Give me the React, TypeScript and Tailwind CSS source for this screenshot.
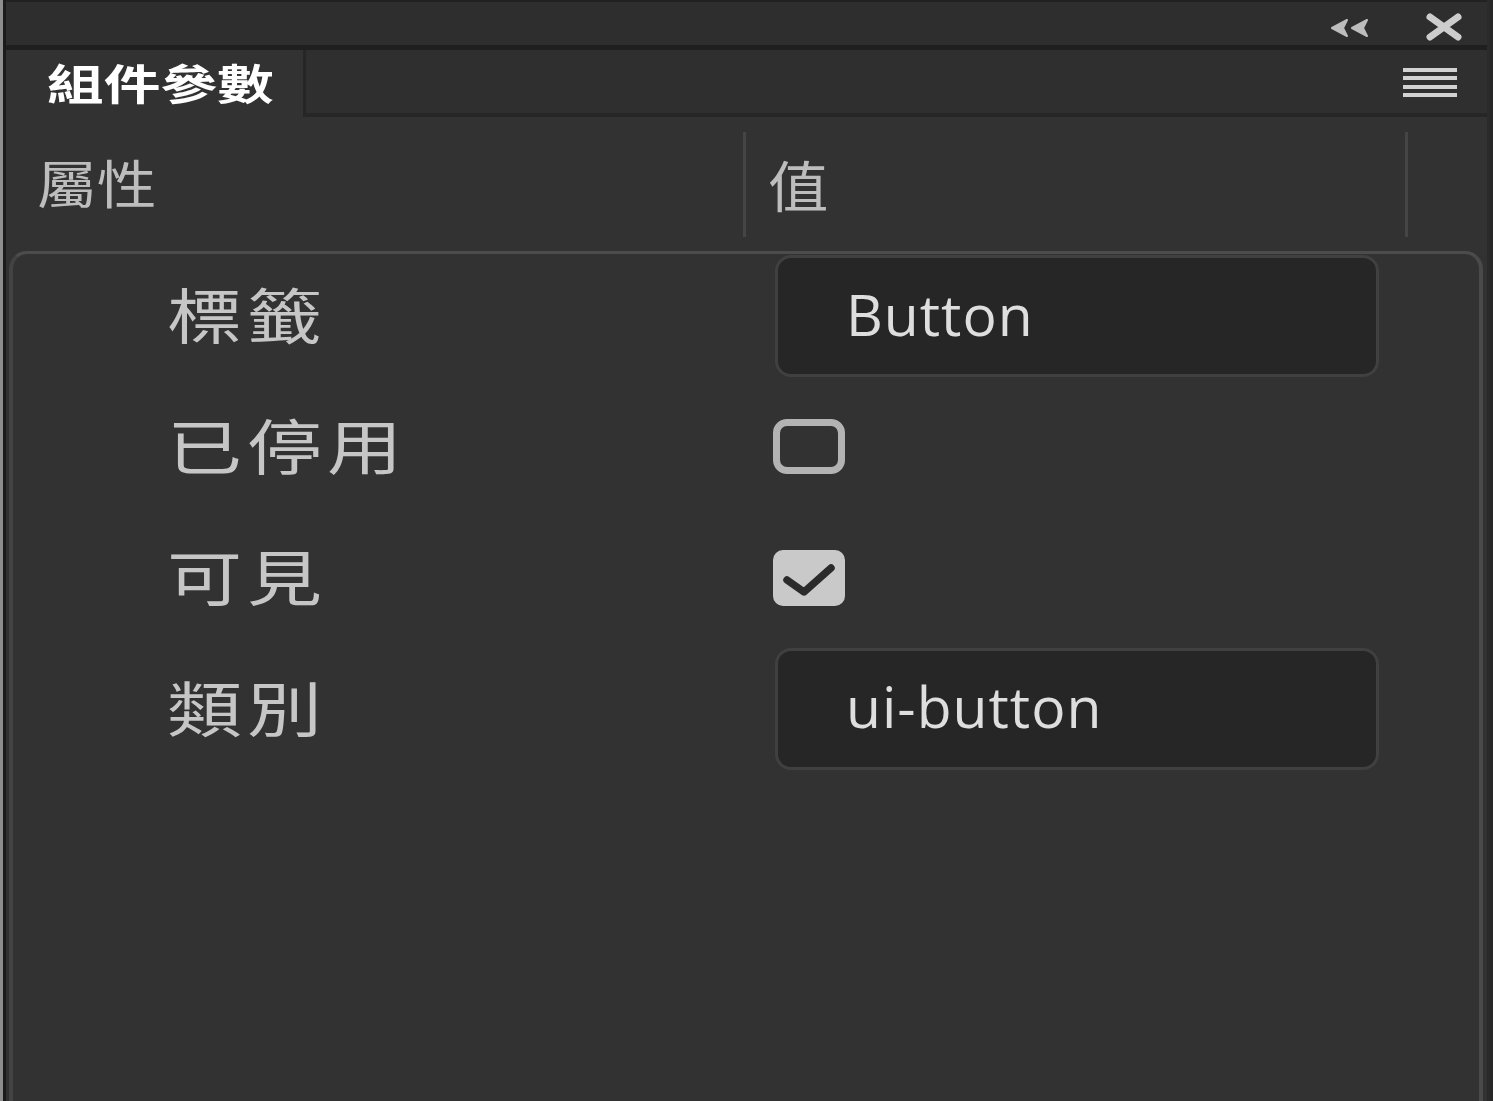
import React from "react";

const cjk = "font-['Noto_Sans_CJK_TC','Noto_Sans_CJK_SC',sans-serif]";

function Label({ text }: { text: string }) {
  return (
    <span
      className={`${cjk} inline-block origin-left scale-x-[1.25] text-[60px] leading-none tracking-[4px] text-[#c6c6c6]`}
    >
      {text}
    </span>
  );
}

function TextField({ value }: { value: string }) {
  return (
    <div className="w-[604px] h-[122px] rounded-[16px] border-[3px] border-[#404040] bg-[#262626] flex items-center pl-[68px]">
      <span className="font-['Open_Sans',sans-serif] font-medium text-[57px] leading-none tracking-[1px] text-[#dedede] pb-[4px]">
        {value}
      </span>
    </div>
  );
}

function Row({ label, children, first }: { label: string; children: React.ReactNode; first?: boolean }) {
  return (
    <div className={`grid grid-cols-[760px_1fr] items-center ${first ? "h-[122px] mt-[1px]" : "h-[131px]"}`}>
      <div className="pl-[154px] pb-[4px]">
        <Label text={label} />
      </div>
      <div className="flex items-center">{children}</div>
    </div>
  );
}

export default function App() {
  return (
    <div className="w-[1493px] h-[1101px] flex bg-[#262626] overflow-hidden">
      <div className="w-[3px] bg-[#8e8e8e]" />
      <div className="w-[1484px] flex flex-col border-l-[3px] border-[#1b1b1b] bg-[#323232]">
        {/* title bar */}
        <div className="h-[45px] bg-[#2e2e2e] border-t-[2px] border-[#222222] flex items-center justify-end pr-[24px] gap-[56px]">
          <svg width="40" height="20" viewBox="0 0 40 20" className="mt-[8px]">
            <path d="M18 2 L3 10 L18 18 L14 10 Z" fill="#bdbdbd" stroke="#bdbdbd" strokeWidth="2" strokeLinejoin="round" />
            <path d="M38 2 L23 10 L38 18 L34 10 Z" fill="#bdbdbd" stroke="#bdbdbd" strokeWidth="2" strokeLinejoin="round" />
          </svg>
          <svg width="38" height="28" viewBox="0 0 38 28" className="mt-[6px]">
            <path d="M5 4 L33 24 M33 4 L5 24" stroke="#cdcdcd" strokeWidth="7" strokeLinecap="round" />
          </svg>
        </div>
        <div className="h-[5px] bg-[#1f1f1f]" />
        {/* tab row */}
        <div className="h-[67px] flex">
          <div className="w-[297px] flex items-center pl-[41px] pb-[4px]">
            <span className={`${cjk} inline-block origin-left scale-x-[1.35] font-bold text-[42px] leading-none text-white`}>
              組件參數
            </span>
          </div>
          <div className="flex-1 bg-[#2f2f2f] border-l-[3px] border-b-[4px] border-[#262626] flex items-center justify-end pr-[30px]">
            <div className="w-[54px] flex flex-col gap-[4.5px] mt-[2px]">
              <div className="h-[4px] bg-[#d2d2d2]" />
              <div className="h-[4px] bg-[#d2d2d2]" />
              <div className="h-[4px] bg-[#d2d2d2]" />
              <div className="h-[4px] bg-[#d2d2d2]" />
            </div>
          </div>
        </div>
        {/* header row */}
        <div className="h-[134px] flex items-center">
          <div className="w-[737px] pl-[31px] pb-[2px]">
            <span className={`${cjk} inline-block origin-left scale-x-[1.15] text-[52px] leading-none text-[#bdbdbd]`}>
              屬性
            </span>
          </div>
          <div className="w-[3px] h-[105px] bg-[#454545]" />
          <div className="w-[659px] pl-[22px]">
            <span className={`${cjk} inline-block origin-left scale-x-[1.1] text-[55px] leading-none text-[#bdbdbd]`}>
              值
            </span>
          </div>
          <div className="w-[3px] h-[105px] bg-[#454545]" />
        </div>
        {/* content */}
        <div className="flex-1 ml-[3px] mr-[4px] rounded-t-[18px] border-t-[3px] border-l-[4px] border-r-[4px] border-t-[#4c4c4c] border-l-[#434343] border-r-[#4a4a4a] bg-[#323232] flex flex-col">
          <Row label="標籤" first>
            <div className="ml-[2px]">
              <TextField value="Button" />
            </div>
          </Row>
          <div className="h-[4px]" />
          <Row label="已停用">
            <div className="w-[72px] h-[55px] rounded-[14px] border-[7px] border-[#b3b3b3]" />
          </Row>
          <Row label="可見">
            <div className="w-[72px] h-[56px] rounded-[10px] bg-[#c9c9c9] flex items-center justify-center">
              <svg width="72" height="56" viewBox="0 0 72 56">
                <path d="M14 30 L31 42 L58 18" fill="none" stroke="#2b2b2b" strokeWidth="7.5" strokeLinecap="round" strokeLinejoin="round" />
              </svg>
            </div>
          </Row>
          <Row label="類別">
            <div className="ml-[2px]">
              <TextField value="ui-button" />
            </div>
          </Row>
        </div>
      </div>
      <div className="w-[3px] bg-[#2a2a2a]" />
    </div>
  );
}
